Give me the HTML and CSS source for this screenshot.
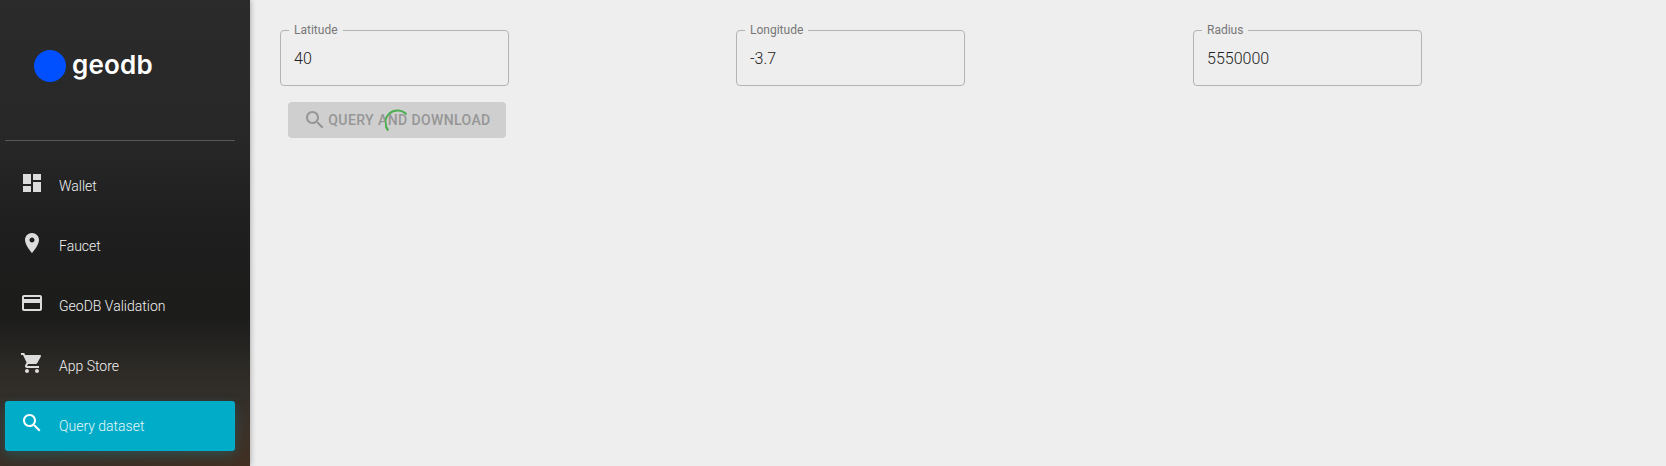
FILE: index.html
```html
<!DOCTYPE html>
<html lang="en">
<head>
    <meta charset="UTF-8">
    <title>Query dataset</title>
    <link rel="stylesheet" href="styles.css">
</head>
<body>
    <div class="wrapper">
        <aside class="sidebar">
            <div class="logo">
                <span class="logo-dot"></span>
                <span class="logo-text">geodb</span>
            </div>
            <nav class="nav">
                <a class="nav-item">
                    <svg class="nav-icon" viewBox="0 0 24 24"><path d="M3 13h8V3H3v10zm0 8h8v-6H3v6zm10 0h8V11h-8v10zm0-18v6h8V3h-8z"/></svg>
                    <span>Wallet</span>
                </a>
                <a class="nav-item">
                    <svg class="nav-icon" viewBox="0 0 24 24"><path d="M12 2C8.13 2 5 5.13 5 9c0 5.25 7 13 7 13s7-7.75 7-13c0-3.87-3.13-7-7-7zm0 9.5c-1.38 0-2.5-1.12-2.5-2.5s1.12-2.5 2.5-2.5 2.5 1.12 2.5 2.5-1.12 2.5-2.5 2.5z"/></svg>
                    <span>Faucet</span>
                </a>
                <a class="nav-item">
                    <svg class="nav-icon" viewBox="0 0 24 24"><path d="M20 4H4c-1.11 0-1.99.89-1.99 2L2 18c0 1.11.89 2 2 2h16c1.11 0 2-.89 2-2V6c0-1.11-.89-2-2-2zm0 14H4v-6h16v6zm0-10H4V6h16v2z"/></svg>
                    <span>GeoDB Validation</span>
                </a>
                <a class="nav-item">
                    <svg class="nav-icon" viewBox="0 0 24 24"><path d="M7 18c-1.1 0-1.99.9-1.99 2S5.9 22 7 22s2-.9 2-2-.9-2-2-2zM1 2v2h2l3.6 7.59-1.35 2.45c-.16.28-.25.61-.25.96 0 1.1.9 2 2 2h12v-2H7.42c-.14 0-.25-.11-.25-.25l.03-.12.9-1.63h7.45c.75 0 1.41-.41 1.75-1.03l3.58-6.49c.08-.14.12-.31.12-.48 0-.55-.45-1-1-1H5.21l-.94-2H1zm16 16c-1.1 0-1.99.9-1.99 2s.89 2 1.99 2 2-.9 2-2-.9-2-2-2z"/></svg>
                    <span>App Store</span>
                </a>
                <a class="nav-item active">
                    <svg class="nav-icon" viewBox="0 0 24 24"><path d="M15.5 14h-.79l-.28-.27C15.41 12.59 16 11.11 16 9.5 16 5.91 13.09 3 9.5 3S3 5.91 3 9.5 5.91 16 9.5 16c1.61 0 3.09-.59 4.23-1.57l.27.28v.79l5 4.99L20.49 19l-4.99-5zm-6 0C7.01 14 5 11.99 5 9.5S7.01 5 9.5 5 14 7.01 14 9.5 11.99 14 9.5 14z"/></svg>
                    <span>Query dataset</span>
                </a>
            </nav>
        </aside>
        <main class="main">
            <div class="fields">
                <fieldset class="field">
                    <legend>Latitude</legend>
                    <input type="text" value="40">
                </fieldset>
                <fieldset class="field">
                    <legend>Longitude</legend>
                    <input type="text" value="-3.7">
                </fieldset>
                <fieldset class="field">
                    <legend>Radius</legend>
                    <input type="text" value="5550000">
                </fieldset>
            </div>
            <button class="query-btn" disabled>
                <svg class="btn-icon" viewBox="0 0 24 24"><path d="M15.5 14h-.79l-.28-.27C15.41 12.59 16 11.11 16 9.5 16 5.91 13.09 3 9.5 3S3 5.91 3 9.5 5.91 16 9.5 16c1.61 0 3.09-.59 4.23-1.57l.27.28v.79l5 4.99L20.49 19l-4.99-5zm-6 0C7.01 14 5 11.99 5 9.5S7.01 5 9.5 5 14 7.01 14 9.5 11.99 14 9.5 14z"/></svg>
                Query and download
                <svg class="spinner" viewBox="0 0 24 24"><path d="M3.3 22.5A11 11 0 0 1 21.5 6.5"/></svg>
            </button>
        </main>
    </div>
</body>
</html>
```

FILE: styles.css
```css
* {
    box-sizing: border-box;
}
html, body {
    height: 100%;
}
body {
    margin: 0;
    font-family: Roboto, sans-serif;
    background: #eeeeee;
    overflow: hidden;
}
.wrapper {
    display: flex;
    height: 466px;
}
.sidebar {
    width: 250px;
    flex-shrink: 0;
    padding: 0 15px 0 5px;
    background:
        radial-gradient(ellipse 200px 70px at 100% 100%, rgba(80, 45, 25, .35), transparent),
        linear-gradient(180deg, #2b2b2b 0%, #272727 30%, #1e1e1e 50%, #1c1c1b 68%, #2e2b27 80%, #37322c 92%, #3a3027 100%);
    box-shadow: 0 0 6px rgba(0, 0, 0, .35);
}
.logo {
    height: 141px;
    width: 230px;
    padding: 50px 0 0 29px;
    display: flex;
    align-items: flex-start;
    gap: 6px;
    border-bottom: 1px solid rgba(180, 180, 180, .35);
}
.logo-dot {
    width: 32px;
    height: 32px;
    border-radius: 50%;
    background: #0050ff;
}
.logo-text {
    font-family: Inter, sans-serif;
    font-weight: 600;
    font-size: 26px;
    line-height: 30px;
    letter-spacing: .2px;
    color: #fff;
}
.nav {
    width: 230px;
    padding-top: 20px;
    display: flex;
    flex-direction: column;
    gap: 10px;
}
.nav-item {
    height: 50px;
    display: flex;
    align-items: center;
    padding-left: 15px;
    gap: 15px;
    border-radius: 3px;
    font-size: 14px;
    font-weight: 300;
    color: #f2f2f2;
}
.nav-icon {
    width: 24px;
    height: 24px;
    margin-top: -6px;
    fill: #dcdcdc;
}
.nav-item.active {
    background: #00acc8;
    color: #e8f8fa;
    box-shadow: 0 4px 12px rgba(0, 172, 200, .25);
}
.nav-item.active .nav-icon {
    fill: #fff;
}
.main {
    flex: 1;
    padding: 23px 0 0 30px;
}
.fields {
    display: grid;
    grid-template-columns: 456px 457px 229px;
}
.field {
    margin: 0;
    width: 229px;
    height: 63px;
    padding: 0 14px;
    border: 1px solid #b3b3b3;
    border-radius: 4px;
}
.field legend {
    padding: 0 5px;
    margin-left: -6px;
    font-size: 12px;
    line-height: 14px;
    color: #777;
}
.field input {
    width: 100%;
    height: 42px;
    margin-left: -1px;
    padding: 0;
    border: 0;
    background: none;
    font-family: inherit;
    font-size: 16px;
    font-weight: 300;
    color: #222;
}
.query-btn {
    position: relative;
    display: flex;
    align-items: center;
    justify-content: center;
    width: 218px;
    height: 36px;
    margin: 16px 0 0 8px;
    padding: 0;
    border: 0;
    border-radius: 4px;
    background: #cfcfcf;
    font-family: inherit;
    font-size: 14px;
    font-weight: 500;
    letter-spacing: .4px;
    text-transform: uppercase;
    color: #969696;
}
.btn-icon {
    width: 24px;
    height: 24px;
    margin-right: 1px;
    fill: #969696;
}
.spinner {
    position: absolute;
    left: 97px;
    top: 6px;
    width: 24px;
    height: 24px;
    fill: none;
    stroke: #4caf50;
    stroke-width: 2;
}
```
